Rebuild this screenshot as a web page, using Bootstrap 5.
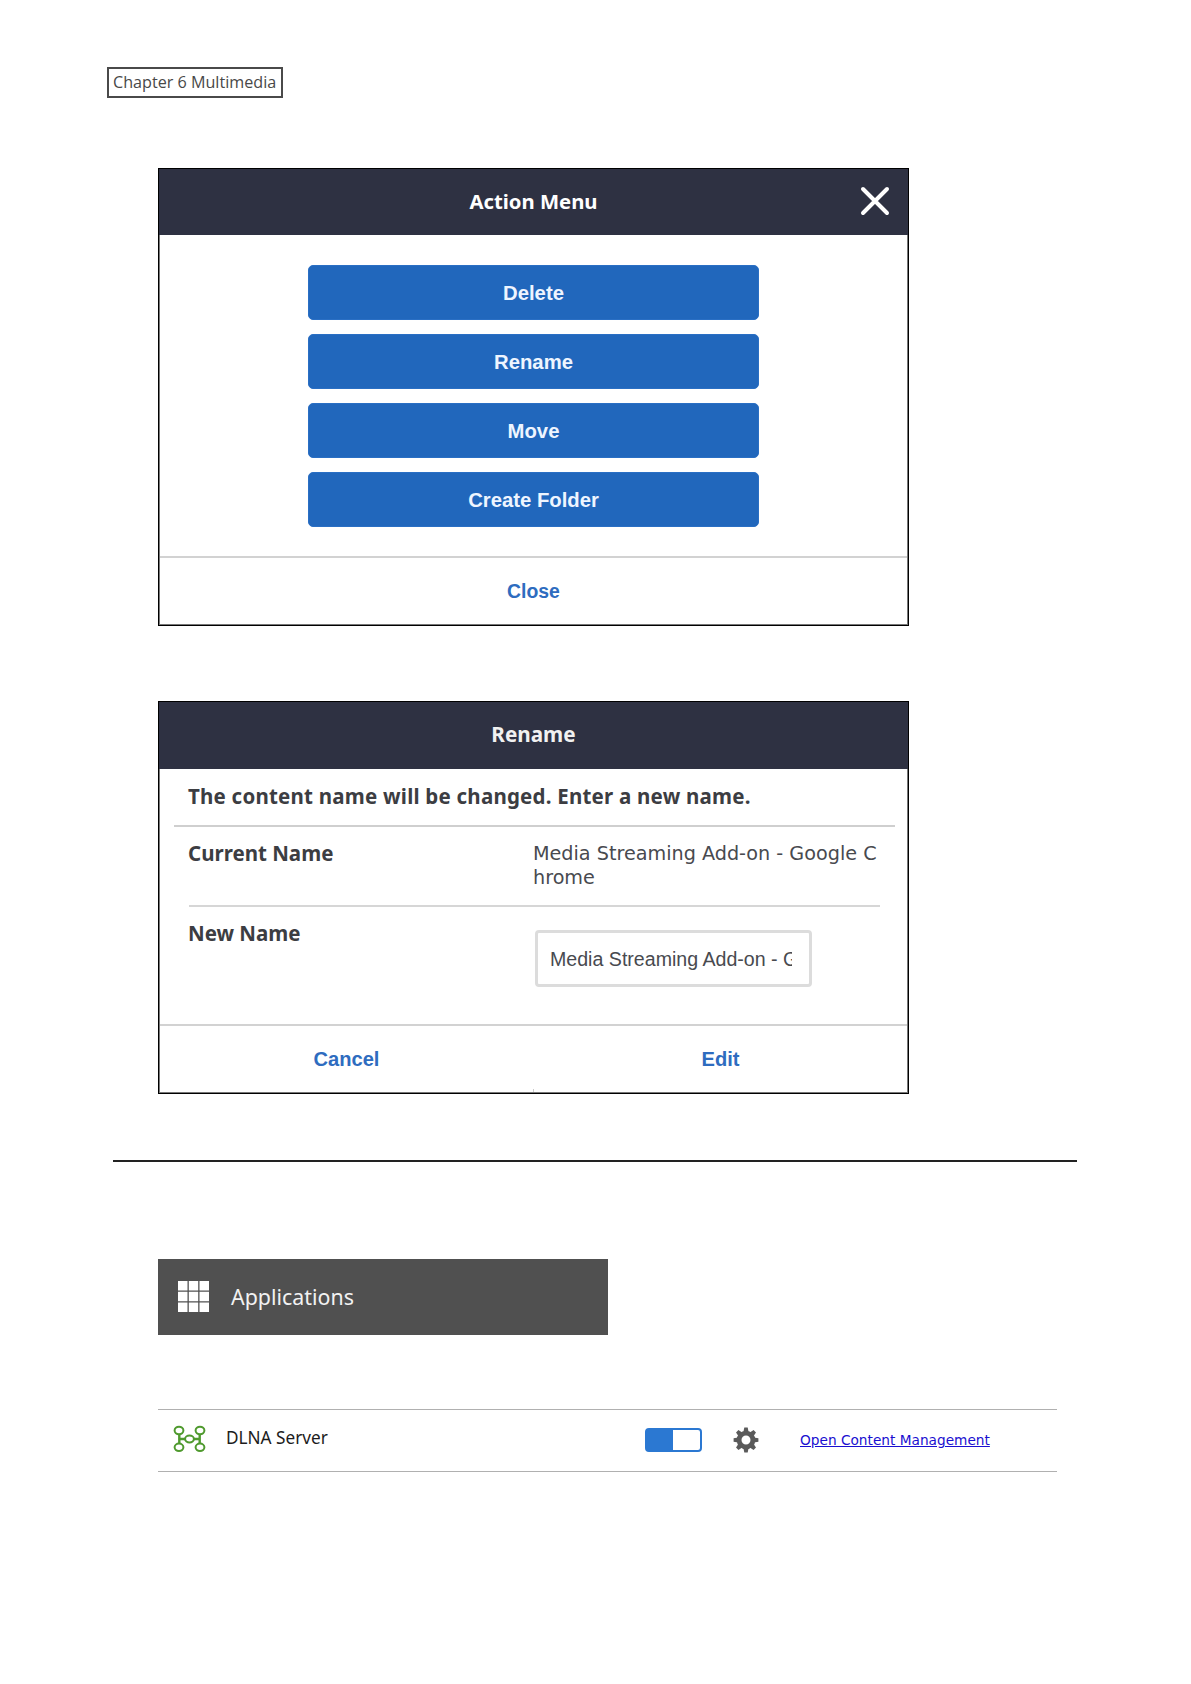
<!DOCTYPE html>
<html lang="en">
<head>
<meta charset="utf-8">
<meta name="viewport" content="width=device-width, initial-scale=1">
<title>Chapter 6 Multimedia</title>
<link href="https://cdn.jsdelivr.net/npm/bootstrap@5.3.0/dist/css/bootstrap.min.css" rel="stylesheet">
<style>
body{background:#fff;color:#3c3d42;font-family:"Noto Sans","DejaVu Sans",sans-serif}
.sheet{width:1191px;height:1684px;padding:67px 0 0 158px;overflow:hidden}
.chapter{width:176px;height:31px;margin-left:-51px;border:2px solid #4a4a4a;font:16.15px/27px "Open Sans",sans-serif;color:#484848;white-space:nowrap;padding-left:4px}
.dialog-box{width:751px;border:1px solid #000;box-shadow:inset 0 0 0 1px #777;overflow:hidden}
.first-dialog{height:458px;margin-top:70px}
.second-dialog{height:393px;margin-top:75px}
.dialog-head{height:66px;background:#2e3142;color:#fff;font-size:20.3px;font-weight:700;line-height:28px;padding-bottom:3px}
.second-dialog .dialog-head{height:67px;padding-bottom:3px;color:#f1f1f1;font-size:20.7px}
.close-x{right:18px;top:17px;width:30px;height:30px;padding:0;border:0;background:none;line-height:0}
.actions{width:451px;margin:30px auto 0;gap:14px}
.action-btn{height:55px;padding:2px 0 0;border:1px solid #2a6fc4;border-radius:5px;background:#2167bc;color:#eef5ff;font:700 20.3px/51px "Liberation Sans",Arial,sans-serif}
.action-btn:hover{background:#1b5aa8;color:#fff}
.dialog-foot{border-top:2px solid #d2d2d2;height:68px;margin:0 1px}
.foot-link{color:#2e6cbf;font:700 20.1px/67px "Liberation Sans",Arial,sans-serif;text-decoration:none;text-align:center}
.first-dialog .foot-link{font-size:19.4px}
.first-dialog .dialog-foot{margin-top:29px}
.lead-line{height:58px;margin:0 13px 0 15px;padding-left:14px;border-bottom:2px solid #cfcfcf;font-weight:700;font-size:20.5px;letter-spacing:.22px;line-height:54px;white-space:nowrap}
.field{margin:0 28px 0 30px}
.field-name{width:345px;font-weight:700;font-size:20.5px;line-height:24px;margin-left:-1px}
.field-current{height:80px;padding-top:14px;border-bottom:2px solid #d6d6d6}
.field-value{font:19.2px/24px "DejaVu Sans",Verdana,sans-serif;color:#484a4f;padding-top:1px}
.field-new{height:117px;padding-top:14px}
.name-input{width:277px;height:57px;margin:9px 0 0 2px;border:3px solid #dcdcdc;border-radius:4px;padding:2px 17px 0 12px;font:19.6px/49px "Liberation Sans",Arial,sans-serif;color:#484a4f;background:#fff}
.tick{width:1px;height:3px;background:#ccc;align-self:flex-end}
.second-dialog .foot-link{width:374px}
.section-rule{width:964px;height:2px;margin:66px 0 0 -45px;background:#222}
.apps-bar{width:450px;height:76px;margin-top:97px;background:#505050;color:#f2f2f2;font-size:21.4px;line-height:30px;padding:0 0 1px 20px}
.apps-bar svg{margin-right:22px}
.dlna-row{width:899px;height:63px;margin-top:74px;border-top:1px solid #b0b0b0;border-bottom:1px solid #b0b0b0;padding:0 0 2px 15px}
.dlna-icon{margin-bottom:2px}
.dlna-name{width:419px;margin-left:20px;font-size:17.2px;line-height:24px;color:#1c1c1c;padding-bottom:3px}
.toggle{width:57px;height:24px;border:2px solid #2b78d2;border-radius:4px;background:linear-gradient(90deg,#2b78d2 50%,#fff 50%)}
.gear{margin-left:31px}
.manage{color:#1a0fd0;font:13.7px/20px "DejaVu Sans",Verdana,sans-serif;text-decoration:underline;white-space:nowrap;margin-left:41px}
</style>
<script src="https://cdn.jsdelivr.net/npm/bootstrap@5.3.0/dist/js/bootstrap.bundle.min.js"></script>
</head>
<body>
<main class="sheet">
  <header class="chapter">Chapter 6 Multimedia</header>

  <section class="dialog-box first-dialog">
    <div class="dialog-head position-relative d-flex align-items-center justify-content-center">Action Menu
      <button class="close-x position-absolute" type="button" aria-label="Close">
        <svg width="30" height="30" viewBox="0 0 30 30" fill="none" stroke="#fff" stroke-width="4" stroke-linecap="round"><path d="M3 3 27 27M27 3 3 27"/></svg>
      </button>
    </div>
    <div class="actions d-flex flex-column">
      <button class="btn action-btn" type="button">Delete</button>
      <button class="btn action-btn" type="button">Rename</button>
      <button class="btn action-btn" type="button">Move</button>
      <button class="btn action-btn" type="button">Create Folder</button>
    </div>
    <div class="dialog-foot d-flex justify-content-center"><a class="foot-link" href="#">Close</a></div>
  </section>

  <section class="dialog-box second-dialog">
    <div class="dialog-head d-flex align-items-center justify-content-center">Rename</div>
    <div class="lead-line">The content name will be changed. Enter a new name.</div>
    <div class="field field-current d-flex">
      <div class="field-name">Current Name</div>
      <div class="field-value text-nowrap">Media Streaming Add-on - Google C<br>hrome</div>
    </div>
    <div class="field field-new d-flex">
      <div class="field-name">New Name</div>
      <input class="name-input" type="text" value="Media Streaming Add-on - Google Chrome" aria-label="New Name">
    </div>
    <div class="dialog-foot d-flex">
      <a class="foot-link" href="#">Cancel</a><span class="tick"></span><a class="foot-link" href="#">Edit</a>
    </div>
  </section>

  <div class="section-rule"></div>

  <div class="apps-bar d-flex align-items-center">
    <svg width="31" height="31" viewBox="0 0 31 31" fill="#fff"><path d="M0 0h9.5v9.5H0zM10.8 0h9.4v9.5h-9.4zM21.5 0H31v9.5h-9.5zM0 10.8h9.5v9.4H0zM10.8 10.8h9.4v9.4h-9.4zM21.5 10.8H31v9.4h-9.5zM0 21.5h9.5V31H0zM10.8 21.5h9.4V31h-9.4zM21.5 21.5H31V31h-9.5z"/></svg>
    <span>Applications</span>
  </div>

  <div class="dlna-row d-flex align-items-center">
    <svg class="dlna-icon" width="33" height="28" viewBox="0 0 33 28" fill="none" stroke="#4f9a2e" stroke-width="2"><path d="M6.3 9.5v9M26.7 9.5v9M6 14h6M21 14h6" stroke-width="2.4"/><ellipse cx="6" cy="5.5" rx="4.4" ry="3.7"/><ellipse cx="27" cy="5.5" rx="4.4" ry="3.7"/><ellipse cx="6" cy="22.3" rx="4.4" ry="3.7"/><ellipse cx="27" cy="22.3" rx="4.4" ry="3.7"/><ellipse cx="16.5" cy="14" rx="4.4" ry="3.4"/></svg>
    <span class="dlna-name">DLNA Server</span>
    <span class="toggle" role="switch" aria-checked="true"></span>
    <svg class="gear" width="26" height="26" viewBox="-13 -13 26 26"><g fill="#5a5a5a"><path id="t" d="M-2.6-8-1.7-12.4H1.7L2.6-8zM-2.6 8-1.7 12.4H1.7L2.6 8zM-8-2.6-12.4-1.7V1.7L-8 2.6zM8-2.6 12.4-1.7V1.7L8 2.6z"/><use href="#t" transform="rotate(45)"/></g><circle r="6.9" fill="none" stroke="#5a5a5a" stroke-width="4.8"/></svg>
    <a class="manage" href="#">Open Content Management</a>
  </div>
</main>
</body>
</html>
